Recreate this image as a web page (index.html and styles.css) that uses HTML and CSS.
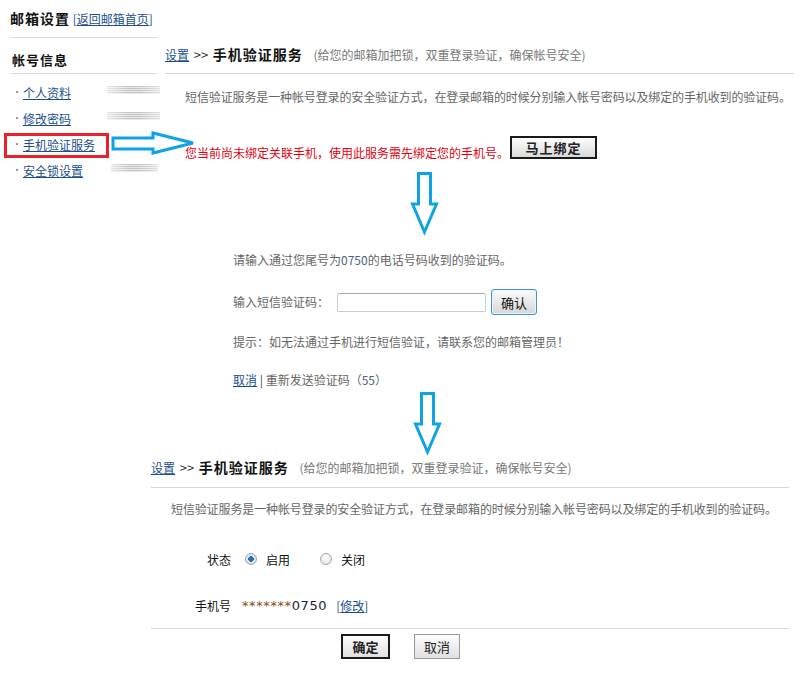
FILE: index.html
```html
<!DOCTYPE html>
<html lang="zh-CN">
<head>
    <meta charset="UTF-8">
    <title>邮箱设置 - 手机验证服务</title>
    <link rel="stylesheet" href="styles.css">
</head>
<body>
<div class="page">
    <div class="top">
        <div class="sidebar">
            <div class="head"><b>邮箱设置</b> <span class="back">[<a href="#">返回邮箱首页</a>]</span></div>
            <div class="group-title">帐号信息</div>
            <ul class="menu">
                <li><span class="dot"></span><a href="#">个人资料</a><span class="blur"></span></li>
                <li><span class="dot"></span><a href="#">修改密码</a><span class="blur"></span></li>
                <li class="marked"><span class="dot"></span><a href="#">手机验证服务</a></li>
                <li><span class="dot"></span><a href="#">安全锁设置</a><span class="blur short"></span></li>
            </ul>
        </div>

        <div class="main">
            <div class="crumb">
                <a href="#">设置</a> <span class="sep">&gt;&gt;</span> <b>手机验证服务</b>
                <span class="note">(给您的邮箱加把锁，双重登录验证，确保帐号安全)</span>
            </div>
            <p class="desc">短信验证服务是一种帐号登录的安全验证方式，在登录邮箱的时候分别输入帐号密码以及绑定的手机收到的验证码。</p>
            <div class="bind">
                <span class="warn">您当前尚未绑定关联手机，使用此服务需先绑定您的手机号。</span>
                <button class="btn-bind">马上绑定</button>
            </div>

            <svg class="arrow-down first" width="30" height="66" viewBox="0 0 30 66">
                <polygon points="8.5,3.5 20.5,3.5 20.5,34 26.5,34 14.5,62 2.5,34 8.5,34" fill="none" stroke="#0ea2e6" stroke-width="3"/>
            </svg>

            <div class="verify">
                <p>请输入通过您尾号为<span class="num">0750</span>的电话号码收到的验证码。</p>
                <div class="code-row">
                    <span>输入短信验证码：</span>
                    <input type="text" class="code-input">
                    <button class="btn-ok">确认</button>
                </div>
                <p class="tip">提示：如无法通过手机进行短信验证，请联系您的邮箱管理员！</p>
                <p class="resend"><a href="#">取消</a> <span class="bar">|</span> 重新发送验证码（<span class="num">55</span>）</p>
            </div>

            <svg class="arrow-down second" width="30" height="66" viewBox="0 0 30 66">
                <polygon points="8.5,3.5 20.5,3.5 20.5,34 26.5,34 14.5,62 2.5,34 8.5,34" fill="none" stroke="#0ea2e6" stroke-width="3"/>
            </svg>
        </div>
    </div>

    <div class="result">
        <div class="crumb">
            <a href="#">设置</a> <span class="sep">&gt;&gt;</span> <b>手机验证服务</b>
            <span class="note">(给您的邮箱加把锁，双重登录验证，确保帐号安全)</span>
        </div>
        <p class="desc">短信验证服务是一种帐号登录的安全验证方式，在登录邮箱的时候分别输入帐号密码以及绑定的手机收到的验证码。</p>
        <div class="form">
            <div class="row status">
                <span class="label">状态</span>
                <span class="radio checked"></span><span class="opt">启用</span>
                <span class="radio"></span><span class="opt">关闭</span>
            </div>
            <div class="row">
                <span class="label">手机号</span>
                <span class="phone"><span class="mask">*******</span>0750</span>
                <span class="edit">[<a href="#">修改</a>]</span>
            </div>
        </div>
        <div class="actions">
            <button class="btn-save">确定</button>
            <button class="btn-cancel">取消</button>
        </div>
    </div>

    <svg class="arrow-right" width="86" height="26" viewBox="0 0 86 26">
        <polygon points="3,8 43,8 43,3 83,13 43,23 43,19 3,19" fill="none" stroke="#0ea2e6" stroke-width="3"/>
    </svg>
</div>
</body>
</html>
```

FILE: styles.css
```css
body {
    margin: 0;
    font-family: "Noto Sans CJK SC", "Liberation Sans", sans-serif;
    font-size: 12px;
    color: #333;
    background-color: #fff;
}
a {
    color: #1b4f8c;
    text-decoration: underline;
}
p {
    margin: 0;
}
.page {
    position: relative;
    width: 794px;
}
.top {
    display: flex;
}

/* sidebar */
.sidebar {
    flex: none;
    width: 147px;
    margin-left: 10px;
    margin-right: 8px;
}
.head {
    height: 37px;
    line-height: 37px;
    border-bottom: 1px solid #d5dbe0;
    white-space: nowrap;
}
.head b {
    font-size: 14px;
    letter-spacing: 1px;
    color: #111;
}
.back {
    color: #1b4f8c;
}
.group-title {
    padding: 14px 0 5px 2px;
    height: 16px;
    line-height: 16px;
    font-size: 13px;
    font-weight: bold;
    letter-spacing: 1px;
    color: #111;
    border-bottom: 1px solid #d5dbe0;
}
.menu {
    list-style: none;
    margin: 5px 0 0;
    padding: 0;
}
.menu li {
    position: relative;
    display: flex;
    align-items: center;
    height: 26px;
    padding-left: 6px;
}
.dot {
    width: 2px;
    height: 2px;
    margin-right: 5px;
    background-color: #999;
}
.blur {
    width: 53px;
    height: 8px;
    margin-left: auto;
    margin-right: -3px;
    margin-top: -4px;
    background:
        linear-gradient(to right, rgba(255,255,255,0.6), rgba(255,255,255,0) 40%, rgba(255,255,255,0) 60%, rgba(255,255,255,0.5)),
        repeating-linear-gradient(to bottom, #c4c4c4 0, #c4c4c4 1px, #e8e8e8 1px, #e8e8e8 2px);
}
.blur.short {
    width: 47px;
    margin-right: -1px;
    margin-top: -5px;
}
.marked::after {
    content: "";
    position: absolute;
    left: -6px;
    top: 2px;
    width: 105px;
    height: 25px;
    border: 3px solid #e8212b;
    box-sizing: border-box;
}

/* main */
.main {
    flex: 1;
    min-width: 0;
}
.crumb {
    height: 20px;
    padding: 44px 0 9px;
    line-height: 20px;
    border-bottom: 1px solid #cfd8df;
    white-space: nowrap;
}
.crumb .sep {
    font-size: 13px;
    color: #333;
    margin: 0 2px;
}
.crumb b {
    font-size: 14px;
    letter-spacing: 1px;
    color: #111;
}
.crumb .note {
    margin-left: 8px;
    color: #777;
}
.desc {
    margin-top: 13px;
    padding-left: 20px;
    line-height: 20px;
    letter-spacing: -0.12px;
    white-space: nowrap;
    color: #666;
}
.bind {
    display: flex;
    align-items: flex-end;
    height: 23px;
    margin-top: 29px;
    padding-left: 20px;
}
.warn {
    color: #e6000f;
    line-height: 16px;
    margin-bottom: -2px;
    margin-right: 1px;
}
.btn-bind {
    width: 87px;
    height: 23px;
    padding: 0;
    border: 2px solid #1a1a1a;
    background: linear-gradient(#fdfdfd, #dadada);
    font-family: inherit;
    font-size: 13px;
    font-weight: bold;
    letter-spacing: 1px;
    color: #222;
}
.arrow-down {
    display: block;
}
.arrow-down.first {
    margin: 11px 0 0 245px;
}
.arrow-down.second {
    margin: 0 0 0 248px;
}
.arrow-right {
    position: absolute;
    left: 110px;
    top: 130px;
}

/* verify step */
.verify {
    margin-top: 14px;
    padding-left: 68px;
    color: #666;
    line-height: 20px;
}
.verify p {
    height: 20px;
}
.num {
    color: #4d5f80;
}
.code-row {
    display: flex;
    align-items: center;
    height: 26px;
    margin-top: 19px;
}
.code-input {
    width: 149px;
    height: 19px;
    margin: 0 5px 0 8px;
    padding: 0;
    box-sizing: border-box;
    border: 1px solid #c9ccd2;
    border-top-color: #a9adb5;
    border-radius: 2px;
}
.btn-ok {
    width: 46px;
    height: 26px;
    padding: 0;
    border: 1px solid #3d93d6;
    border-radius: 3px;
    background: linear-gradient(#fbfbfb, #d6d6d6);
    box-shadow: inset 0 0 0 1px #e8f3fb;
    font-family: inherit;
    font-size: 13px;
    color: #111;
}
.verify .tip {
    margin-top: 17px;
}
.verify .resend {
    margin-top: 18px;
}
.resend .bar {
    color: #1b4f8c;
}

/* result */
.result {
    margin: 1px 0 0 151px;
    width: 638px;
}
.result .crumb {
    padding-top: 0;
    padding-bottom: 10px;
}
.result .desc {
    margin-top: 11px;
}
.form {
    padding-bottom: 13px;
    border-bottom: 1px solid #cfd8df;
}
.row {
    display: flex;
    align-items: center;
    height: 20px;
    margin-top: 26px;
    color: #111;
}
.row.status {
    margin-top: 30px;
}
.label {
    width: 80px;
    text-align: right;
    margin-right: 14px;
}
.radio {
    width: 12px;
    height: 12px;
    box-sizing: border-box;
    border: 1px solid #a3a9b1;
    border-radius: 50%;
    background: radial-gradient(circle at 50% 40%, #fff, #dcdcdc);
}
.radio.checked {
    background: radial-gradient(circle, #3f7fc4 0, #1d5aa0 2.5px, #e8eef5 3px, #cfd5dc 6px);
}
.opt {
    margin-left: 9px;
    margin-right: 30px;
}
.phone {
    margin-left: -3px;
    font-family: "DejaVu Sans", sans-serif;
    font-size: 13px;
    letter-spacing: 0.6px;
    color: #1a1f3a;
}
.mask {
    color: #8a4a12;
}
.edit {
    margin-left: 9px;
    color: #1b4f8c;
}
.actions {
    display: flex;
    gap: 24px;
    margin-top: 5px;
    padding-left: 190px;
}
.actions button {
    height: 25px;
    padding: 0;
    font-family: inherit;
    font-size: 13px;
    color: #222;
    background: linear-gradient(#fdfdfd, #e0e0e0);
}
.btn-save {
    width: 49px;
    border: 2px solid #1a1a1a;
    font-weight: bold;
}
.btn-cancel {
    width: 46px;
    border: 1px solid #999;
}
```
